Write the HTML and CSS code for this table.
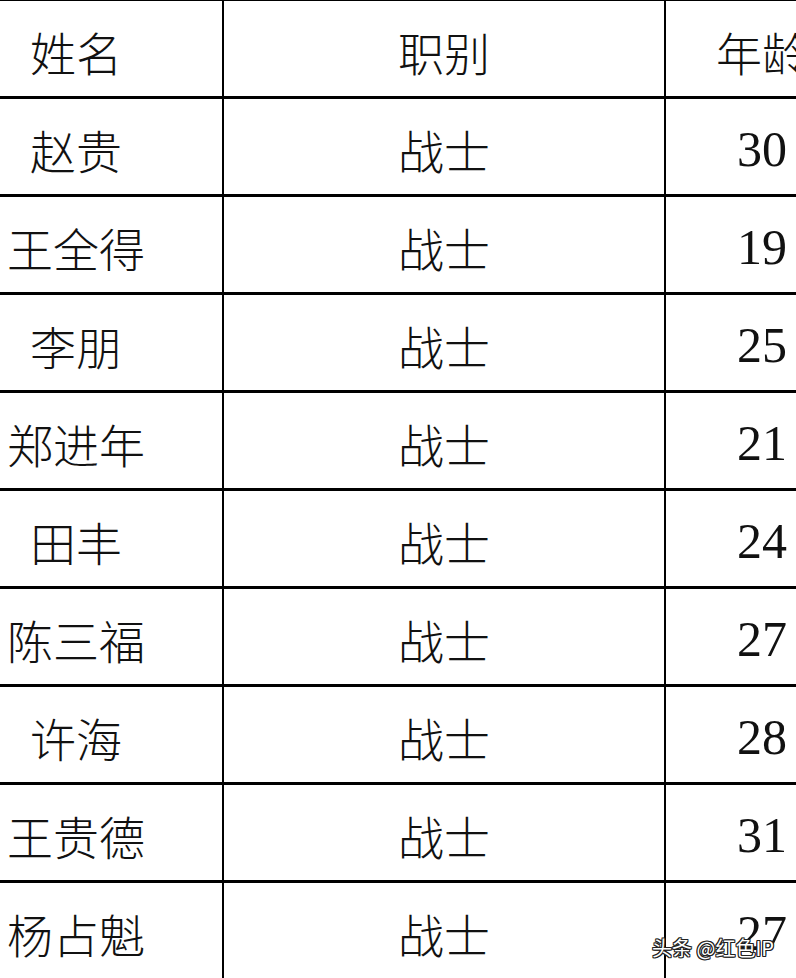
FILE: index.html
```html
<!DOCTYPE html>
<html lang="zh">
<head>
<meta charset="utf-8">
<title>名单</title>
<link rel="stylesheet" href="styles.css">
</head>
<body>
<div class="page">
  <div class="table">
    <div class="cell name">姓名</div><div class="cell role">职别</div><div class="cell age cjk">年龄</div>
    <div class="cell name">赵贵</div><div class="cell role">战士</div><div class="cell age">30</div>
    <div class="cell name">王全得</div><div class="cell role">战士</div><div class="cell age">19</div>
    <div class="cell name">李朋</div><div class="cell role">战士</div><div class="cell age">25</div>
    <div class="cell name">郑进年</div><div class="cell role">战士</div><div class="cell age">21</div>
    <div class="cell name">田丰</div><div class="cell role">战士</div><div class="cell age">24</div>
    <div class="cell name">陈三福</div><div class="cell role">战士</div><div class="cell age">27</div>
    <div class="cell name">许海</div><div class="cell role">战士</div><div class="cell age">28</div>
    <div class="cell name">王贵德</div><div class="cell role">战士</div><div class="cell age">31</div>
    <div class="cell name">杨占魁</div><div class="cell role">战士</div><div class="cell age">27</div>
  </div>
  <div class="watermark">头条 @红色IP</div>
</div>
</body>
</html>
```
FILE: styles.css
```css
html, body {
  margin: 0;
  padding: 0;
  background: #ffffff;
}
body {
  width: 796px;
  height: 978px;
  overflow: hidden;
}
.page {
  position: relative;
  width: 796px;
  height: 978px;
  overflow: hidden;
}
.table {
  display: grid;
  grid-template-columns: 222px 440px 192px;
  grid-auto-rows: 95px;
  column-gap: 2px;
  row-gap: 3px;
  padding-top: 2px;
  margin-top: -1px;
  background: #000000;
  width: 858px;
}
.cell {
  background: #ffffff;
  display: flex;
  align-items: center;
  justify-content: center;
  font-family: "Noto Sans CJK SC", "Noto Sans", sans-serif;
  font-weight: 300;
  font-size: 46px;
  line-height: 1;
  color: #111111;
  padding-top: 4px;
  box-sizing: border-box;
}
.name {
  padding-right: 70px;
}
.age {
  font-family: "Liberation Serif", "Noto Sans CJK SC", serif;
  font-weight: 400;
  font-size: 50px;
}
.age.cjk {
  font-family: "Noto Sans CJK SC", sans-serif;
  font-weight: 300;
  font-size: 46px;
}
.watermark {
  position: absolute;
  left: 652px;
  top: 936px;
  font-family: "Noto Sans CJK SC", "Noto Sans", sans-serif;
  font-size: 20px;
  line-height: 24px;
  color: #ffffff;
  white-space: nowrap;
  text-shadow: 1px 1px 0 #222, -1px -1px 0 #222, 1px -1px 0 #222, -1px 1px 0 #222, 0 1px 0 #222, 0 -1px 0 #222, 1px 0 0 #222, -1px 0 0 #222;
}
```
